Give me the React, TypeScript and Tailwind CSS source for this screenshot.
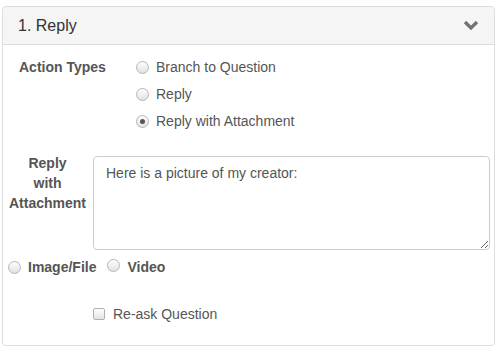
import React from "react";

function Radio({ checked = false }: { checked?: boolean }) {
  return (
    <span className="relative inline-flex h-[13px] w-[13px] shrink-0 items-center justify-center rounded-full border border-[#b5b5b5] bg-gradient-to-b from-[#fdfdfd] to-[#e2e2e2]">
      {checked && <span className="h-[5px] w-[5px] rounded-full bg-[#555]" />}
    </span>
  );
}

export default function App() {
  return (
    <div
      className="h-[357px] w-[498px] bg-white pl-[2px] pt-[6px] text-[14px] text-[#555]"
      style={{ fontFamily: '"Liberation Sans", Arial, sans-serif' }}
    >
      <div className="h-[340px] w-[493px] rounded-[4px] border border-[#ddd] bg-white">
        <div className="flex h-[38px] items-center justify-between rounded-t-[4px] border-b border-[#ddd] bg-[#f5f5f5] pl-[15px] pr-[15px]">
          <span className="text-[16px] leading-[18px] text-[#333]">1. Reply</span>
          <svg width="16" height="10" viewBox="0 0 16 10" className="mt-[-2px]">
            <polyline points="2,2 8,8 14,2" fill="none" stroke="#727272" strokeWidth="3.2" strokeLinejoin="miter" />
          </svg>
        </div>

        <div className="pt-[12px]">
          <div className="flex">
            <div className="w-[133px] pl-[16px] font-bold leading-[20px]">Action Types</div>
            <div className="flex flex-col gap-[7px]">
              <label className="flex items-center gap-[7px] leading-[20px]">
                <Radio />
                <span>Branch to Question</span>
              </label>
              <label className="flex items-center gap-[7px] leading-[20px]">
                <Radio />
                <span>Reply</span>
              </label>
              <label className="flex items-center gap-[7px] leading-[20px]">
                <Radio checked />
                <span>Reply with Attachment</span>
              </label>
            </div>
          </div>

          <div className="mt-[22px] flex">
            <div className="w-[87px] pl-[2px] text-center font-bold leading-[20px]">
              Reply
              <br />
              with
              <br />
              Attachment
            </div>
            <textarea
              readOnly
              defaultValue="Here is a picture of my creator:"
              className="ml-[3px] mt-[3px] h-[94px] w-[397px] rounded-[4px] border border-[#ccc] px-[12px] py-[6px] text-[14px] leading-[20px] text-[#555] outline-none"
              style={{ fontFamily: '"Liberation Sans", Arial, sans-serif' }}
            />
          </div>

          <div className="mt-[7px] flex items-center pl-[5px] leading-[20px]">
            <Radio />
            <span className="ml-[7px] font-bold">Image/File</span>
            <span className="ml-[11px]">
              <Radio />
            </span>
            <span className="ml-[7px] font-bold">Video</span>
          </div>

          <div className="mt-[27px] flex items-center pl-[90px] leading-[20px]">
            <span className="h-[12px] w-[12px] rounded-[2px] border border-[#b0b0b0] bg-gradient-to-b from-[#fdfdfd] to-[#e4e4e4]" />
            <span className="ml-[8px]">Re-ask Question</span>
          </div>
        </div>
      </div>
    </div>
  );
}
